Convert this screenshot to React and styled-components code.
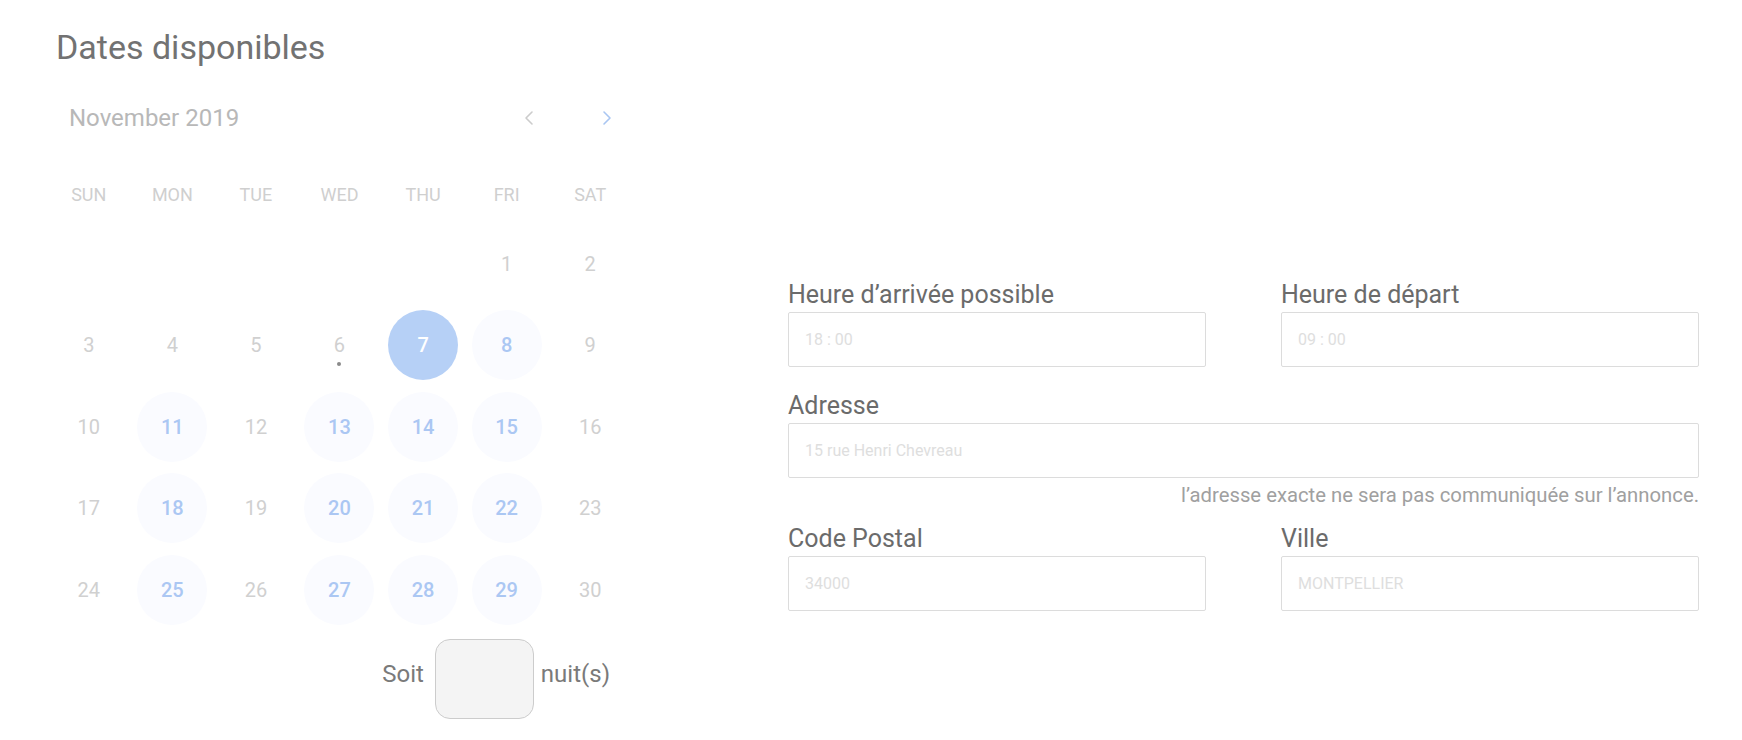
import React from "react";
import styled, { createGlobalStyle } from "styled-components";

const GlobalStyle = createGlobalStyle`
  body {
    margin: 0;
    background: #ffffff;
    font-family: Roboto, "Noto Sans", sans-serif;
  }
`;

const WEEKDAYS = ["SUN", "MON", "TUE", "WED", "THU", "FRI", "SAT"];
const AVAILABLE = [8, 11, 13, 14, 15, 18, 20, 21, 22, 25, 27, 28, 29];
const SELECTED = 7;
const TODAY = 6;
// November 2019 starts on a Friday
const OFFSET = 5;

function Chevron({ dir, color }) {
  const points = dir === "left" ? "8,2 2,8 8,14" : "2,2 8,8 2,14";
  return (
    <svg width="10" height="16" viewBox="0 0 10 16">
      <polyline
        points={points}
        fill="none"
        stroke={color}
        strokeWidth="1.6"
        strokeLinecap="round"
        strokeLinejoin="round"
      />
    </svg>
  );
}

function App() {
  const cells = [];
  for (let i = 0; i < OFFSET; i++) cells.push(null);
  for (let d = 1; d <= 30; d++) cells.push(d);

  const dayKind = (d) => {
    if (d === SELECTED) return "selected";
    if (AVAILABLE.includes(d)) return "available";
    return "default";
  };

  return (
    <Page>
      <GlobalStyle />
      <CalendarColumn>
        <Title>Dates disponibles</Title>
        <MonthBar>
          <MonthName>November 2019</MonthName>
          <Nav>
            <NavButton>
              <Chevron dir="left" color="#cccccc" />
            </NavButton>
            <NavButton>
              <Chevron dir="right" color="#a9c6f2" />
            </NavButton>
          </Nav>
        </MonthBar>
        <WeekRow>
          {WEEKDAYS.map((w) => (
            <WeekDay key={w}>{w}</WeekDay>
          ))}
        </WeekRow>
        <DaysGrid>
          {cells.map((d, i) => (
            <DayCell key={i}>
              {d && (
                <Day $kind={dayKind(d)}>
                  {d}
                  {d === TODAY && <TodayDot />}
                </Day>
              )}
            </DayCell>
          ))}
        </DaysGrid>
        <NightsRow>
          <NightsText>Soit</NightsText>
          <NightsBox />
          <NightsText>nuit(s)</NightsText>
        </NightsRow>
      </CalendarColumn>

      <FormColumn>
        <FieldRow>
          <Field>
            <Label>Heure d’arrivée possible</Label>
            <Input placeholder="18 : 00" />
          </Field>
          <Field>
            <Label>Heure de départ</Label>
            <Input placeholder="09 : 00" />
          </Field>
        </FieldRow>
        <Field $top={24}>
          <Label>Adresse</Label>
          <Input placeholder="15 rue Henri Chevreau" />
          <Hint>l’adresse exacte ne sera pas communiquée sur l’annonce.</Hint>
        </Field>
        <FieldRow $top={17}>
          <Field>
            <Label>Code Postal</Label>
            <Input placeholder="34000" />
          </Field>
          <Field>
            <Label>Ville</Label>
            <Input placeholder="MONTPELLIER" />
          </Field>
        </FieldRow>
      </FormColumn>
    </Page>
  );
}

export default App;

const Page = styled.div`
  display: flex;
  align-items: flex-start;
  gap: 156px;
  padding: 27px 0 0 47px;
  width: 1742px;
  height: 740px;
  box-sizing: border-box;
`;

const CalendarColumn = styled.div`
  width: 585px;
  display: flex;
  flex-direction: column;
`;

const Title = styled.h2`
  margin: 0 0 37px 9px;
  font-size: 34px;
  line-height: 40px;
  font-weight: 400;
  color: #727272;
`;

const MonthBar = styled.div`
  display: flex;
  align-items: center;
  justify-content: space-between;
  padding: 0 15px 0 22px;
  height: 28px;
`;

const MonthName = styled.span`
  font-size: 24px;
  line-height: 28px;
  color: #b8b8b8;
`;

const Nav = styled.div`
  display: flex;
  gap: 58px;
`;

const NavButton = styled.span`
  width: 20px;
  height: 20px;
  display: flex;
  align-items: center;
  justify-content: center;
  cursor: pointer;
`;

const WeekRow = styled.div`
  display: grid;
  grid-template-columns: repeat(7, 1fr);
  margin-top: 42px;
  height: 40px;
  align-items: center;
`;

const WeekDay = styled.span`
  text-align: center;
  font-size: 18px;
  color: #cfcfcf;
`;

const DaysGrid = styled.div`
  display: grid;
  grid-template-columns: repeat(7, 1fr);
  grid-auto-rows: 81.5px;
  margin-top: 9px;
`;

const DayCell = styled.div`
  display: flex;
  align-items: center;
  justify-content: center;
`;

const Day = styled.div`
  position: relative;
  width: 70px;
  height: 70px;
  border-radius: 50%;
  display: flex;
  align-items: center;
  justify-content: center;
  font-size: 20px;
  font-weight: ${(p) => (p.$kind === "default" ? 400 : 500)};
  color: ${(p) =>
    p.$kind === "selected"
      ? "#ffffff"
      : p.$kind === "available"
      ? "#abc7f3"
      : "#d0d0d0"};
  background: ${(p) =>
    p.$kind === "selected"
      ? "#b6d0f6"
      : p.$kind === "available"
      ? "#fafbff"
      : "transparent"};
`;

const TodayDot = styled.span`
  position: absolute;
  left: 50%;
  top: 52px;
  width: 4px;
  height: 4px;
  margin-left: -2px;
  border-radius: 50%;
  background: #8a8a8a;
`;

const NightsRow = styled.div`
  display: flex;
  align-items: center;
  justify-content: flex-end;
  margin-top: 8px;
  padding-right: 22px;
`;

const NightsText = styled.span`
  font-size: 24px;
  color: #7a7a7a;
  margin-bottom: 9px;
`;

const NightsBox = styled.div`
  width: 99px;
  height: 80px;
  margin: 0 7px 0 11px;
  box-sizing: border-box;
  border: 1px solid #cccccc;
  border-radius: 15px;
  background: #f4f4f4;
`;

const FormColumn = styled.div`
  width: 911px;
  padding-top: 253px;
  display: flex;
  flex-direction: column;
`;

const FieldRow = styled.div`
  display: grid;
  grid-template-columns: 418px 418px;
  column-gap: 75px;
  margin-top: ${(p) => p.$top || 0}px;
`;

const Field = styled.div`
  display: flex;
  flex-direction: column;
  margin-top: ${(p) => p.$top || 0}px;
`;

const Label = styled.label`
  font-size: 25px;
  line-height: 30px;
  color: #6b6b6b;
  margin-bottom: 2px;
`;

const Input = styled.input`
  height: 55px;
  box-sizing: border-box;
  border: 1px solid #dcdcdc;
  border-radius: 2px;
  padding: 0 16px;
  font-family: Roboto, sans-serif;
  font-size: 16px;
  color: #555555;
  outline: none;

  &::placeholder {
    color: #dedede;
  }
`;

const Hint = styled.span`
  margin-top: 5px;
  align-self: flex-end;
  font-size: 20.3px;
  line-height: 24px;
  color: #a0a0a0;
`;
